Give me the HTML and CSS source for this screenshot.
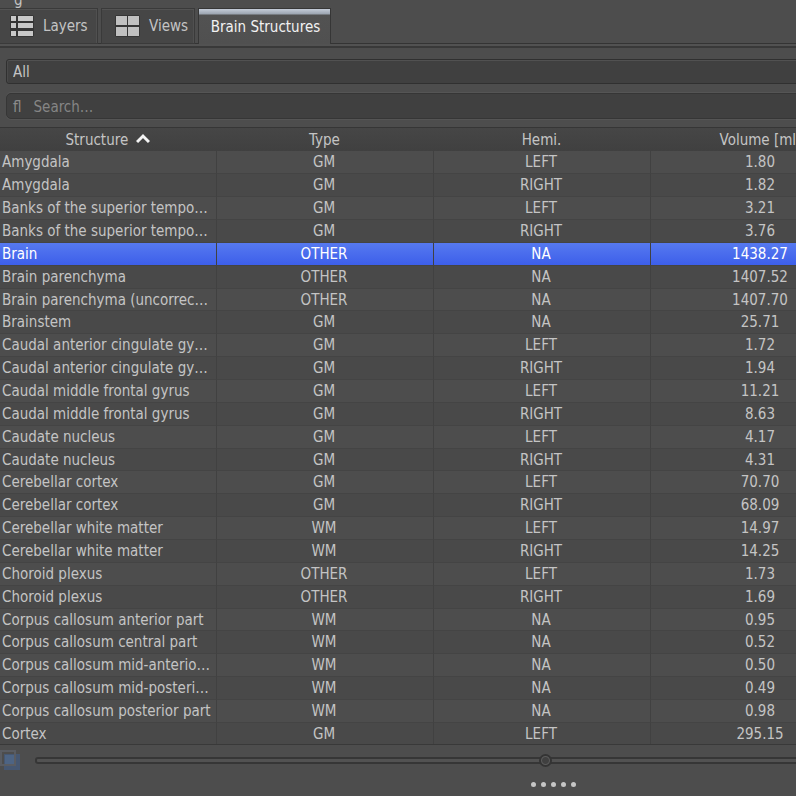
FILE: index.html
```html
<!DOCTYPE html>
<html lang="en">
<head>
<meta charset="utf-8">
<title>Brain Structures</title>
<link rel="stylesheet" href="styles.css">
</head>
<body>
<main class="panel">
  <div class="caption">g</div>
  <nav class="tabs">
    <button class="tab tab-layers" type="button">
      <svg class="icon" width="26" height="24" viewBox="0 0 26 24"><rect x="1" y="1" width="24" height="22" rx="2" fill="#353535"/><g fill="#c8c8c8"><rect x="2" y="2" width="5" height="5"/><rect x="9" y="2" width="15" height="5"/><rect x="2" y="9" width="5" height="5"/><rect x="9" y="9" width="15" height="5"/><rect x="2" y="17" width="5" height="5"/><rect x="9" y="17" width="15" height="5"/></g></svg>
      <span>Layers</span>
    </button>
    <button class="tab tab-views" type="button">
      <svg class="icon" width="26" height="24" viewBox="0 0 26 24"><rect x="0" y="1" width="25" height="22" rx="2" fill="#353535"/><g fill="#c0c0c0"><rect x="1" y="2" width="11" height="9"/><rect x="13" y="2" width="11" height="9"/><rect x="1" y="13" width="11" height="9"/><rect x="13" y="13" width="11" height="9"/></g></svg>
      <span>Views</span>
    </button>
    <button class="tab tab-active" type="button">Brain Structures</button>
  </nav>
  <section class="filters">
    <select class="filter" aria-label="Group"><option>All</option></select>
    <label class="search"><span class="search-mark">ﬂ</span><input class="search-input" type="text" placeholder="Search…" aria-label="Search"></label>
  </section>
  <table class="grid">
    <thead>
      <tr><th>Structure <svg class="sort" width="14" height="12" viewBox="0 0 14 12"><path d="M1 9 7 3l6 6" fill="none" stroke="#f4f4f4" stroke-width="3"/></svg></th><th>Type</th><th>Hemi.</th><th>Volume [ml]</th><th class="rest"></th></tr>
    </thead>
    <tbody>
      <tr><td>Amygdala</td><td>GM</td><td>LEFT</td><td>1.80</td><td></td></tr>
      <tr><td>Amygdala</td><td>GM</td><td>RIGHT</td><td>1.82</td><td></td></tr>
      <tr><td>Banks of the superior tempo…</td><td>GM</td><td>LEFT</td><td>3.21</td><td></td></tr>
      <tr><td>Banks of the superior tempo…</td><td>GM</td><td>RIGHT</td><td>3.76</td><td></td></tr>
      <tr class="selected"><td>Brain</td><td>OTHER</td><td>NA</td><td>1438.27</td><td></td></tr>
      <tr><td>Brain parenchyma</td><td>OTHER</td><td>NA</td><td>1407.52</td><td></td></tr>
      <tr><td>Brain parenchyma (uncorrec…</td><td>OTHER</td><td>NA</td><td>1407.70</td><td></td></tr>
      <tr><td>Brainstem</td><td>GM</td><td>NA</td><td>25.71</td><td></td></tr>
      <tr><td>Caudal anterior cingulate gy…</td><td>GM</td><td>LEFT</td><td>1.72</td><td></td></tr>
      <tr><td>Caudal anterior cingulate gy…</td><td>GM</td><td>RIGHT</td><td>1.94</td><td></td></tr>
      <tr><td>Caudal middle frontal gyrus</td><td>GM</td><td>LEFT</td><td>11.21</td><td></td></tr>
      <tr><td>Caudal middle frontal gyrus</td><td>GM</td><td>RIGHT</td><td>8.63</td><td></td></tr>
      <tr><td>Caudate nucleus</td><td>GM</td><td>LEFT</td><td>4.17</td><td></td></tr>
      <tr><td>Caudate nucleus</td><td>GM</td><td>RIGHT</td><td>4.31</td><td></td></tr>
      <tr><td>Cerebellar cortex</td><td>GM</td><td>LEFT</td><td>70.70</td><td></td></tr>
      <tr><td>Cerebellar cortex</td><td>GM</td><td>RIGHT</td><td>68.09</td><td></td></tr>
      <tr><td>Cerebellar white matter</td><td>WM</td><td>LEFT</td><td>14.97</td><td></td></tr>
      <tr><td>Cerebellar white matter</td><td>WM</td><td>RIGHT</td><td>14.25</td><td></td></tr>
      <tr><td>Choroid plexus</td><td>OTHER</td><td>LEFT</td><td>1.73</td><td></td></tr>
      <tr><td>Choroid plexus</td><td>OTHER</td><td>RIGHT</td><td>1.69</td><td></td></tr>
      <tr><td>Corpus callosum anterior part</td><td>WM</td><td>NA</td><td>0.95</td><td></td></tr>
      <tr><td>Corpus callosum central part</td><td>WM</td><td>NA</td><td>0.52</td><td></td></tr>
      <tr><td>Corpus callosum mid-anterio…</td><td>WM</td><td>NA</td><td>0.50</td><td></td></tr>
      <tr><td>Corpus callosum mid-posteri…</td><td>WM</td><td>NA</td><td>0.49</td><td></td></tr>
      <tr><td>Corpus callosum posterior part</td><td>WM</td><td>NA</td><td>0.98</td><td></td></tr>
      <tr><td>Cortex</td><td>GM</td><td>LEFT</td><td>295.15</td><td></td></tr>
    </tbody>
  </table>
  <footer class="opacity">
    <svg width="20" height="20" viewBox="0 0 20 20"><rect x="4" y="4" width="16" height="16" fill="#465771"/><rect x="1" y="1" width="14" height="14" fill="none" stroke="#595c62" stroke-width="2"/><rect x="5" y="5" width="9" height="9" fill="#4d6484"/></svg>
    <input class="slider" type="range" min="0" max="100" value="50" aria-label="Opacity">
  </footer>
  <div class="grip"><i></i><i></i><i></i><i></i><i></i></div>
</main>
</body>
</html>
```
FILE: styles.css
```css
* { box-sizing: border-box; }
html, body { margin: 0; overflow: hidden; background: #4d4d4d; }
body, button, input, select {
  font: 15px/20px "DejaVu Sans Condensed", "Open Sans", "Noto Sans", sans-serif;
  color: #c4c4c4;
}
/* The dock is wider than its window and is cut off on the right. */
.panel { width: 139%; min-height: 100vh; }
.caption { height: 8px; padding-left: 14px; line-height: 0; overflow: hidden; }

.tabs {
  display: flex;
  align-items: flex-start;
  height: 40px;
  border-bottom: 2px solid #393939;
  background: linear-gradient(#4d4d4d 35px, #343434 35px, #343434 36px, #525252 36px);
}
.tab {
  display: flex;
  align-items: center;
  height: 36px;
  padding: 0;
  gap: 8px;
  border: 1px solid #3a3a3a;
  background: #464646;
  box-shadow: inset 0 1px #535353, inset -1px 0 #505050;
}
.tab-layers { width: 98px; padding-left: 9px; border-left: 0; }
.tab-views { width: 94px; margin-left: 3px; padding-left: 13px; }
.tab-active {
  width: 133px;
  margin-left: 3px;
  padding-left: 2px;
  justify-content: center;
  border: 1px solid #363636;
  border-bottom: 0;
  background: linear-gradient(#c4ccd8 0, #9ca5b1 5px, #525252 6px, #505050);
  box-shadow: none;
  color: #f2f2f2;
}

.filters { padding: 11px 6px 0; height: 79px; }
.filter, .search { display: flex; width: 100%; background: #404040; }
.filter {
  height: 25px;
  padding: 0 6px;
  appearance: none;
  border: 1px solid #303030;
  border-radius: 3px;
  box-shadow: inset 0 1px #515151, inset 1px 0 #4a4a4a;
}
.search {
  align-items: center;
  height: 26px;
  margin-top: 9px;
  padding: 1px 0 0 6px;
  gap: 12px;
  border: 1px solid #363636;
  border-radius: 5px;
  box-shadow: 0 -1px #555555, 0 1px #555555;
}
.search-mark { color: #8c8c8c; }
.search-input { flex: 1; padding: 0; border: 0; background: none; }
.search-input::placeholder { color: #858585; opacity: 1; }

.grid {
  width: 100%;
  table-layout: fixed;
  border-collapse: separate;
  border-spacing: 0;
  border-top: 1px solid #363636;
  border-bottom: 1px solid #393939;
}
.grid th {
  width: 217px;
  height: 23px;
  padding: 1px 2px 0 0;
  font-weight: 400;
  background: linear-gradient(#464646, #404040);
}
.grid .rest { width: auto; }
.sort { margin-left: 3px; }
.grid td {
  height: 23px;
  padding: 1px 2px 0 0;
  line-height: 20px;
  vertical-align: top;
  text-align: center;
  white-space: nowrap;
  border-right: 1px solid #414141;
  border-bottom: 1px solid #444444;
  background: #4d4d4d;
}
.grid tr:nth-child(even) td { background: #494949; }
.grid tr:nth-child(7n) td { height: 22px; }
.grid tr:last-child td { height: 21px; border-bottom: 0; }
.grid td:first-child { padding-left: 2px; text-align: left; }
.grid td:nth-child(4), .grid th:nth-child(4) { padding-right: 0; padding-left: 2px; }
.grid .selected td {
  color: #ffffff;
  background: linear-gradient(#5679f0, #3d5fea);
}

.opacity { display: flex; align-items: center; height: 30px; gap: 15px; }
.slider {
  appearance: none;
  flex: 1;
  height: 14px;
  margin: 0 50px 0 0;
  background: none;
}
.slider::-webkit-slider-runnable-track {
  height: 7px;
  border: 2px solid #363636;
  border-radius: 3px;
  background: #525252;
}
.slider::-webkit-slider-thumb {
  appearance: none;
  width: 13px;
  height: 13px;
  margin-top: -5px;
  border: 2px solid #343434;
  border-radius: 50%;
  background: radial-gradient(#404040 3px, #5c5c5c 4px);
}
.grip { display: flex; justify-content: center; gap: 5px; padding-top: 7px; }
.grip i { width: 5px; height: 5px; border-radius: 50%; background: #c6c6c6; }
```
